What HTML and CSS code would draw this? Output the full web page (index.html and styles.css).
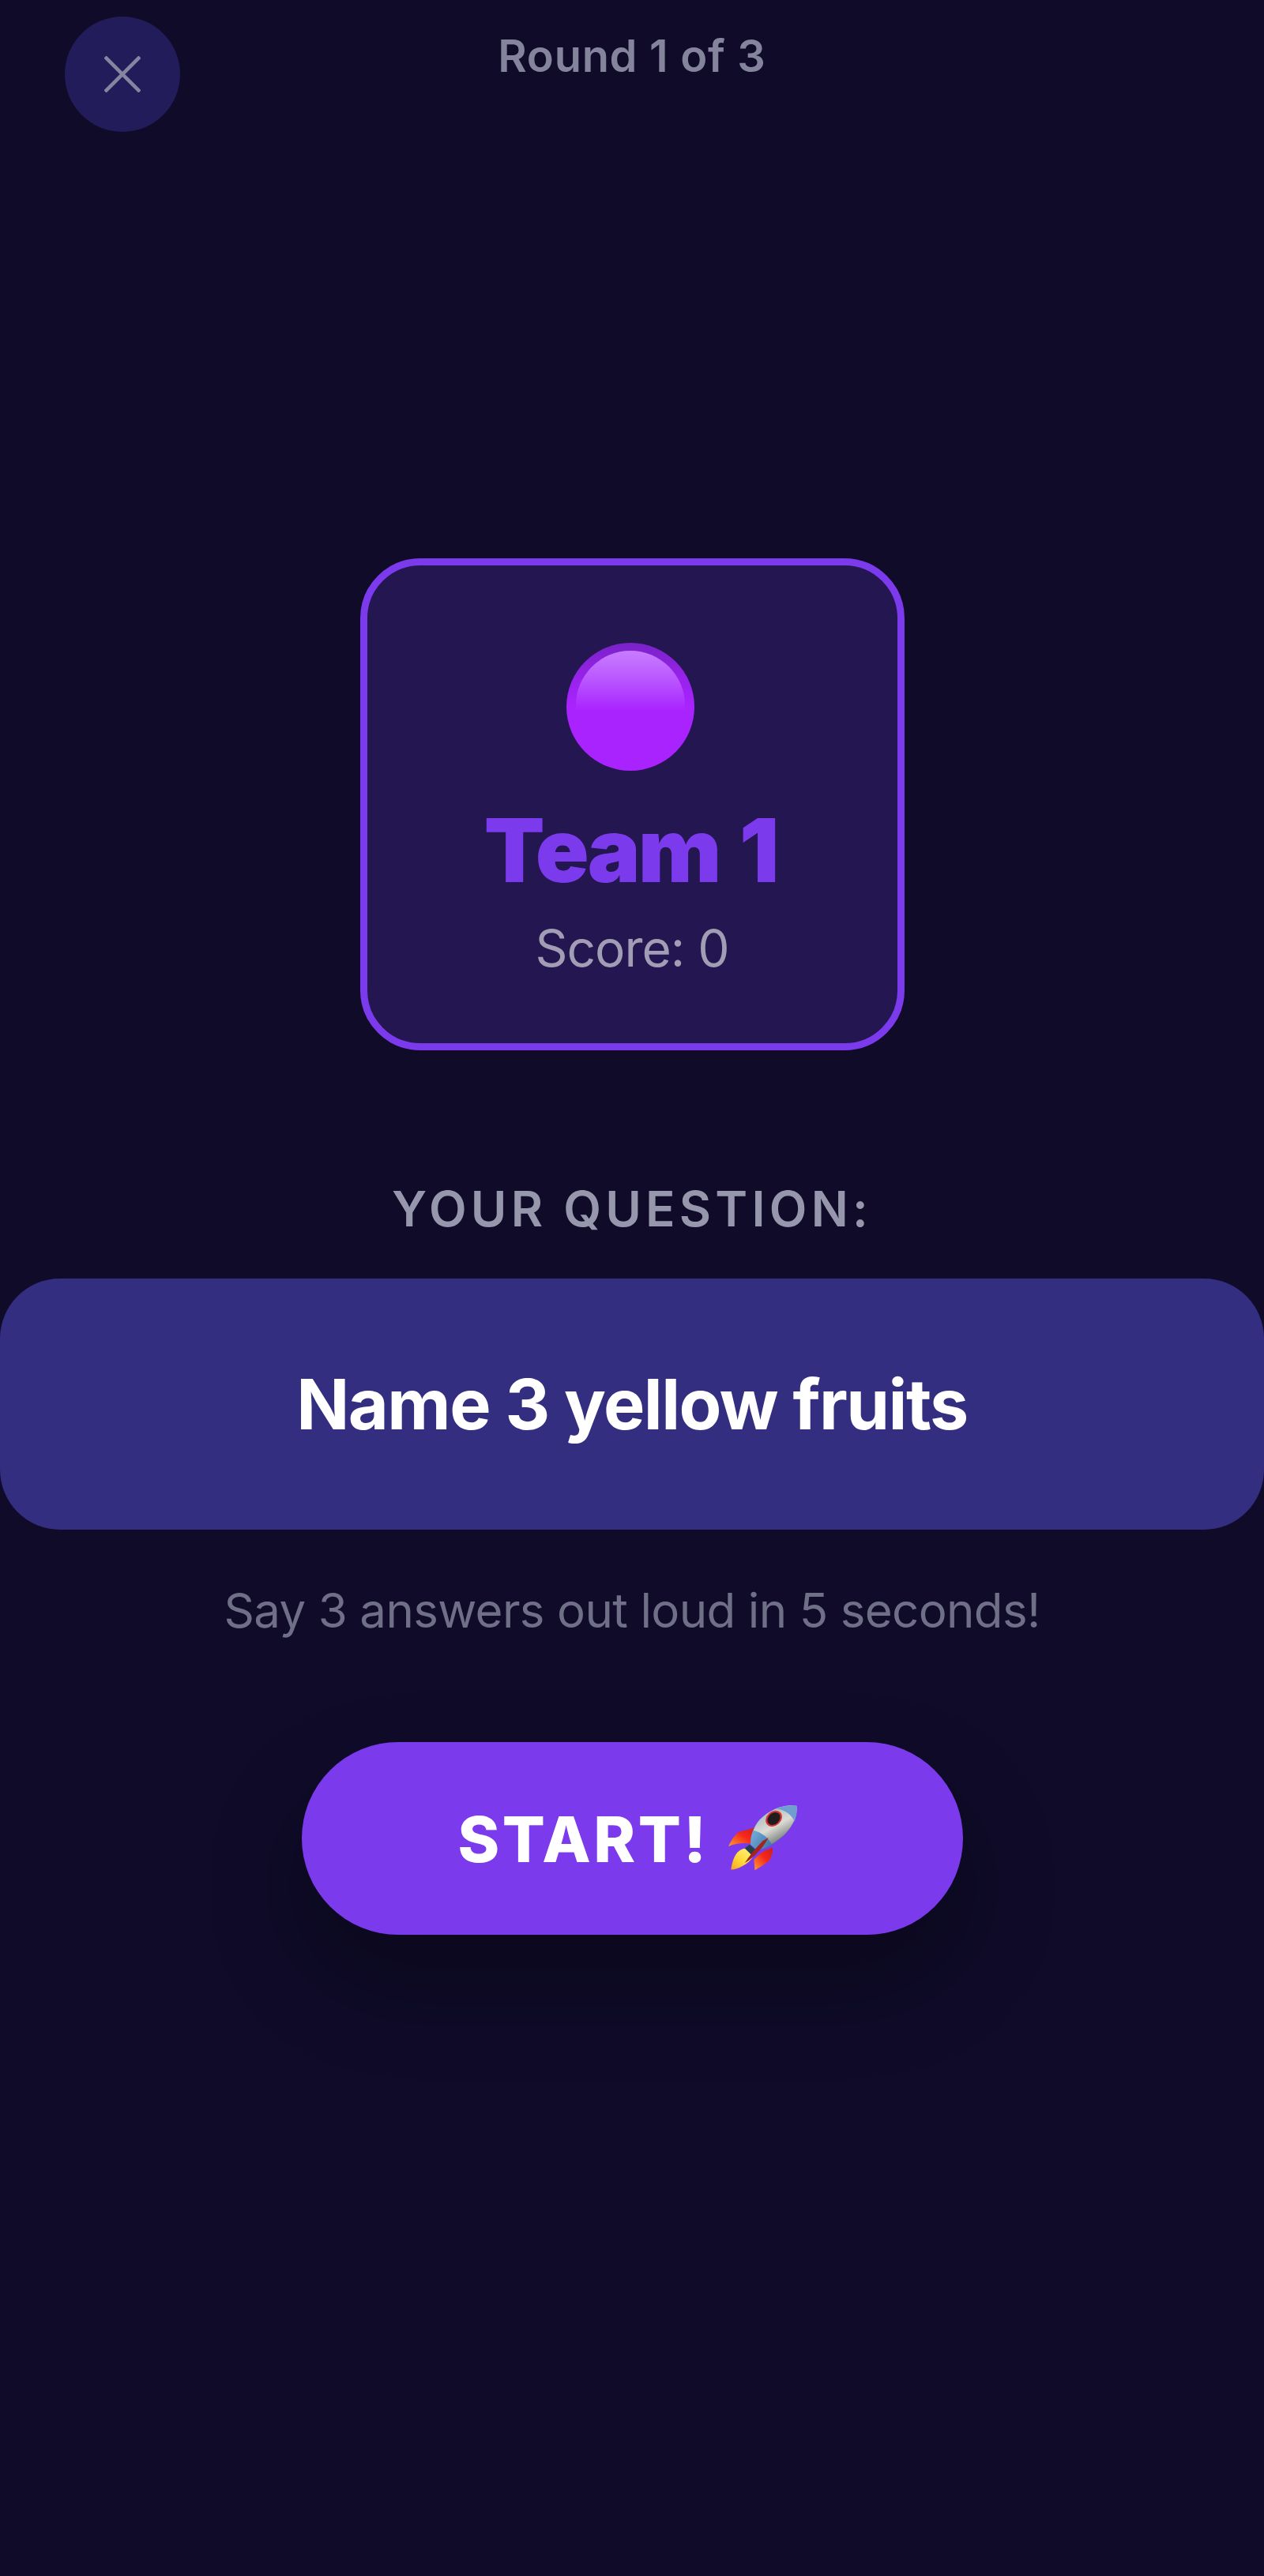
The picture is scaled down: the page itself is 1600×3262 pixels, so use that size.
FILE: index.html
```html
<!DOCTYPE html>
<html lang="en">
<head>
    <meta charset="UTF-8">
    <meta name="viewport" content="width=device-width, initial-scale=1.0">
    <title>Round 1 of 3</title>
    <link rel="stylesheet" href="styles.css">
</head>
<body>
    <div class="game-container">
        <header class="top-bar">
            <button class="close-btn" type="button" aria-label="Close">
                <svg width="46" height="46" viewBox="0 0 46 46">
                    <path d="M1 1 L45 45 M45 1 L1 45" stroke="#85859f" stroke-width="4.5" fill="none"/>
                </svg>
            </button>
            <p class="round-label">Round 1 of 3</p>
        </header>

        <div class="team-card">
            <div class="team-ball"></div>
            <h1 class="team-name">Team 1</h1>
            <p class="team-score">Score: 0</p>
        </div>

        <p class="question-label">YOUR QUESTION:</p>
        <div class="question-box">Name 3 yellow fruits</div>
        <p class="question-hint">Say 3 answers out loud in 5 seconds!</p>

        <button class="start-btn" type="button">
            <span>START!</span>
            <!-- rocket emoji -->
            <svg class="rocket" width="87" height="84" viewBox="0 0 260 250">
                <defs>
                    <linearGradient id="fin" x1="0" y1="1" x2="1" y2="0">
                        <stop offset="0" stop-color="#ff9d2e"/>
                        <stop offset="0.55" stop-color="#f5281c"/>
                        <stop offset="1" stop-color="#c9201c"/>
                    </linearGradient>
                    <linearGradient id="flame" x1="0" y1="1" x2="1" y2="0">
                        <stop offset="0" stop-color="#f7a21f"/>
                        <stop offset="0.5" stop-color="#ffdf3f"/>
                        <stop offset="1" stop-color="#fff08a"/>
                    </linearGradient>
                    <linearGradient id="hull" x1="0.15" y1="0.55" x2="0.75" y2="0.95">
                        <stop offset="0" stop-color="#6ea4d2"/>
                        <stop offset="0.4" stop-color="#4d86b8"/>
                        <stop offset="1" stop-color="#2f5f8c"/>
                    </linearGradient>
                    <linearGradient id="chrome" x1="0.3" y1="0.1" x2="0.8" y2="0.9">
                        <stop offset="0" stop-color="#a9b6be"/>
                        <stop offset="0.5" stop-color="#dcdcd6"/>
                        <stop offset="1" stop-color="#666d69"/>
                    </linearGradient>
                </defs>
                <path d="M0 155 C15 125 25 110 40 100 C60 95 85 90 105 82 L88 145 C55 140 25 145 0 155Z" fill="url(#fin)"/>
                <path d="M100 245 L97 205 C110 190 125 178 140 170 L168 160 C168 180 162 200 152 212 C135 225 118 235 100 245Z" fill="url(#fin)"/>
                <path d="M10 243 C14 215 22 192 34 178 C48 165 62 160 72 165 L96 190 C85 208 70 222 52 230 C38 238 24 242 10 243Z" fill="url(#flame)"/>
                <path d="M62 162 L80 148 L108 172 L92 192Z" fill="#26404a"/>
                <!-- hull: blue tail, chrome middle, blue nose -->
                <path d="M258 2 C215 -6 160 12 118 55 C95 82 82 115 84 148 L108 170 C145 165 185 140 218 105 C248 72 262 35 258 2Z" fill="url(#hull)"/>
                <path d="M258 2 C215 -6 160 12 118 55 C108 67 101 80 95 94 C125 102 150 120 164 146 C184 134 202 122 218 105 C248 72 262 35 258 2Z" fill="url(#chrome)"/>
                <path d="M258 2 C235 -2 205 3 180 12 C210 15 240 35 250 60 C258 42 261 20 258 2Z" fill="#6f9fd0"/>
                <ellipse cx="172" cy="50" rx="34" ry="27" transform="rotate(-42 172 50)" fill="#d9352f"/>
                <ellipse cx="172" cy="50" rx="27" ry="21" transform="rotate(-42 172 50)" fill="#211c20"/>
                <path d="M152 122 L130 135 C105 160 80 190 62 218 C92 200 125 170 152 122Z" fill="#a3241f"/>
            </svg>
        </button>
    </div>
</body>
</html>
```

FILE: styles.css
```css
* {
    margin: 0;
    padding: 0;
    box-sizing: border-box;
}

body {
    min-height: 100vh;
    background: #0f0b29;
    font-family: Inter, "Liberation Sans", sans-serif;
    overflow: hidden;
}

.game-container {
    min-height: 100vh;
    display: flex;
    flex-direction: column;
    align-items: center;
}

.top-bar {
    width: 100%;
    display: grid;
    grid-template-columns: 1fr auto 1fr;
    align-items: start;
    padding: 21px 82px 0;
}

.close-btn {
    width: 146px;
    height: 146px;
    border: none;
    border-radius: 50%;
    background: #221d5a;
    display: flex;
    align-items: center;
    justify-content: center;
}

.round-label {
    grid-column: 2;
    font-size: 56px;
    line-height: 100px;
    font-weight: 600;
    letter-spacing: 0.7px;
    color: #84849c;
}

.team-card {
    width: 689px;
    height: 623px;
    margin-top: 540px;
    padding-top: 98px;
    border: 9px solid #7c3aed;
    border-radius: 76px;
    background: #241650;
    display: flex;
    flex-direction: column;
    align-items: center;
}

.team-ball {
    position: relative;
    width: 162px;
    height: 162px;
    margin-right: 4px;
    border-radius: 50%;
    background: linear-gradient(to bottom, #7a22c8 0%, #9a22ee 30%, #a923ff 50%);
}

.team-ball::before {
    content: "";
    position: absolute;
    top: 10px;
    left: 12px;
    right: 12px;
    height: 76px;
    border-radius: 69px 69px 0 0;
    background: linear-gradient(to bottom, #c77dff 0%, #b955ff 50%, #a923ff 100%);
}

.team-name {
    margin-top: 40px;
    margin-right: 4px;
    font-size: 112px;
    line-height: 120px;
    font-weight: 900;
    letter-spacing: -3px;
    word-spacing: 6px;
    color: #7c3aed;
}

.team-score {
    margin-top: 30px;
    font-size: 64px;
    line-height: 70px;
    font-weight: 400;
    letter-spacing: -1px;
    color: #a09db5;
}

.question-label {
    margin-top: 171px;
    font-size: 62px;
    line-height: 60px;
    font-weight: 600;
    letter-spacing: 5.2px;
    color: #9696ac;
}

.question-box {
    width: 100%;
    height: 318px;
    margin-top: 58px;
    border-radius: 76px;
    background: #332e80;
    display: flex;
    align-items: center;
    justify-content: center;
    font-size: 88px;
    font-weight: 700;
    letter-spacing: -1.5px;
    color: #ffffff;
}

.question-hint {
    margin-top: 67px;
    font-size: 60px;
    line-height: 70px;
    letter-spacing: -0.65px;
    color: #6f6f88;
}

.start-btn {
    width: 837px;
    height: 244px;
    margin-top: 132px;
    padding-right: 12px;
    border: none;
    border-radius: 122px;
    background: #7c3aed;
    box-shadow: 0 60px 120px rgba(0, 0, 0, 0.3);
    display: flex;
    align-items: center;
    justify-content: center;
    gap: 24px;
    font-family: inherit;
    font-size: 80px;
    font-weight: 800;
    letter-spacing: 3.5px;
    color: #ffffff;
}
```
